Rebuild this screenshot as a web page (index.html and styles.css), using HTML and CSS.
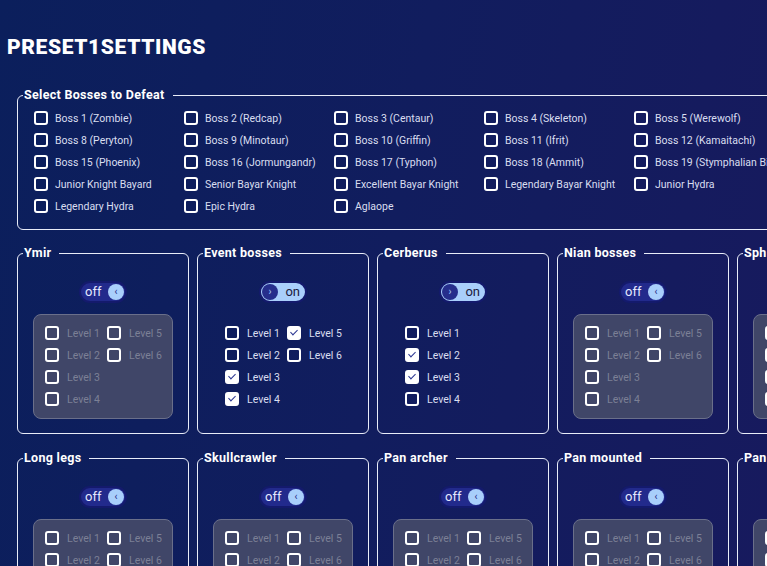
FILE: index.html
```html
<!DOCTYPE html>
<html>
<head>
<meta charset="utf-8">
<link rel="stylesheet" href="styles.css">
</head>
<body>
<div class="page">
  <h1 class="title">PRESET1SETTINGS</h1>

  <fieldset class="bosses">
    <legend>Select Bosses to Defeat</legend>
    <div class="boss-grid">
      <label class="opt"><span class="box"></span>Boss 1 (Zombie)</label>
      <label class="opt"><span class="box"></span>Boss 2 (Redcap)</label>
      <label class="opt"><span class="box"></span>Boss 3 (Centaur)</label>
      <label class="opt"><span class="box"></span>Boss 4 (Skeleton)</label>
      <label class="opt"><span class="box"></span>Boss 5 (Werewolf)</label>
      <label class="opt"><span class="box"></span>Boss 8 (Peryton)</label>
      <label class="opt"><span class="box"></span>Boss 9 (Minotaur)</label>
      <label class="opt"><span class="box"></span>Boss 10 (Griffin)</label>
      <label class="opt"><span class="box"></span>Boss 11 (Ifrit)</label>
      <label class="opt"><span class="box"></span>Boss 12 (Kamaitachi)</label>
      <label class="opt"><span class="box"></span>Boss 15 (Phoenix)</label>
      <label class="opt"><span class="box"></span>Boss 16 (Jormungandr)</label>
      <label class="opt"><span class="box"></span>Boss 17 (Typhon)</label>
      <label class="opt"><span class="box"></span>Boss 18 (Ammit)</label>
      <label class="opt"><span class="box"></span>Boss 19 (Stymphalian Birds)</label>
      <label class="opt"><span class="box"></span>Junior Knight Bayard</label>
      <label class="opt"><span class="box"></span>Senior Bayar Knight</label>
      <label class="opt"><span class="box"></span>Excellent Bayar Knight</label>
      <label class="opt"><span class="box"></span>Legendary Bayar Knight</label>
      <label class="opt"><span class="box"></span>Junior Hydra</label>
      <label class="opt"><span class="box"></span>Legendary Hydra</label>
      <label class="opt"><span class="box"></span>Epic Hydra</label>
      <label class="opt"><span class="box"></span>Aglaope</label>
    </div>
  </fieldset>

  <div class="cards">
    <fieldset class="card">
      <legend>Ymir</legend>
      <div class="card-body">
        <div class="toggle off"><span class="tx">off</span><span class="knob">‹</span></div>
        <div class="levels disabled">
          <label class="opt"><span class="box"></span>Level 1</label>
          <label class="opt"><span class="box"></span>Level 5</label>
          <label class="opt"><span class="box"></span>Level 2</label>
          <label class="opt"><span class="box"></span>Level 6</label>
          <label class="opt"><span class="box"></span>Level 3</label>
          <span></span>
          <label class="opt"><span class="box"></span>Level 4</label>
        </div>
      </div>
    </fieldset>

    <fieldset class="card">
      <legend>Event bosses</legend>
      <div class="card-body">
        <div class="toggle on"><span class="knob">›</span><span class="tx">on</span></div>
        <div class="levels">
          <label class="opt"><span class="box"></span>Level 1</label>
          <label class="opt"><span class="box checked"></span>Level 5</label>
          <label class="opt"><span class="box"></span>Level 2</label>
          <label class="opt"><span class="box"></span>Level 6</label>
          <label class="opt"><span class="box checked"></span>Level 3</label>
          <span></span>
          <label class="opt"><span class="box checked"></span>Level 4</label>
        </div>
      </div>
    </fieldset>

    <fieldset class="card">
      <legend>Cerberus</legend>
      <div class="card-body">
        <div class="toggle on"><span class="knob">›</span><span class="tx">on</span></div>
        <div class="levels single">
          <label class="opt"><span class="box"></span>Level 1</label>
          <label class="opt"><span class="box checked"></span>Level 2</label>
          <label class="opt"><span class="box checked"></span>Level 3</label>
          <label class="opt"><span class="box"></span>Level 4</label>
        </div>
      </div>
    </fieldset>

    <fieldset class="card">
      <legend>Nian bosses</legend>
      <div class="card-body">
        <div class="toggle off"><span class="tx">off</span><span class="knob">‹</span></div>
        <div class="levels disabled">
          <label class="opt"><span class="box"></span>Level 1</label>
          <label class="opt"><span class="box"></span>Level 5</label>
          <label class="opt"><span class="box"></span>Level 2</label>
          <label class="opt"><span class="box"></span>Level 6</label>
          <label class="opt"><span class="box"></span>Level 3</label>
          <span></span>
          <label class="opt"><span class="box"></span>Level 4</label>
        </div>
      </div>
    </fieldset>

    <fieldset class="card">
      <legend>Sphinx</legend>
      <div class="card-body">
        <div class="toggle off"><span class="tx">off</span><span class="knob">‹</span></div>
        <div class="levels disabled">
          <label class="opt"><span class="box"></span>Level 1</label>
          <label class="opt"><span class="box"></span>Level 5</label>
          <label class="opt"><span class="box"></span>Level 2</label>
          <label class="opt"><span class="box"></span>Level 6</label>
          <label class="opt"><span class="box"></span>Level 3</label>
          <span></span>
          <label class="opt"><span class="box"></span>Level 4</label>
        </div>
      </div>
    </fieldset>

    <fieldset class="card">
      <legend>Long legs</legend>
      <div class="card-body">
        <div class="toggle off"><span class="tx">off</span><span class="knob">‹</span></div>
        <div class="levels disabled">
          <label class="opt"><span class="box"></span>Level 1</label>
          <label class="opt"><span class="box"></span>Level 5</label>
          <label class="opt"><span class="box"></span>Level 2</label>
          <label class="opt"><span class="box"></span>Level 6</label>
          <label class="opt"><span class="box"></span>Level 3</label>
          <span></span>
          <label class="opt"><span class="box"></span>Level 4</label>
        </div>
      </div>
    </fieldset>

    <fieldset class="card">
      <legend>Skullcrawler</legend>
      <div class="card-body">
        <div class="toggle off"><span class="tx">off</span><span class="knob">‹</span></div>
        <div class="levels disabled">
          <label class="opt"><span class="box"></span>Level 1</label>
          <label class="opt"><span class="box"></span>Level 5</label>
          <label class="opt"><span class="box"></span>Level 2</label>
          <label class="opt"><span class="box"></span>Level 6</label>
          <label class="opt"><span class="box"></span>Level 3</label>
          <span></span>
          <label class="opt"><span class="box"></span>Level 4</label>
        </div>
      </div>
    </fieldset>

    <fieldset class="card">
      <legend>Pan archer</legend>
      <div class="card-body">
        <div class="toggle off"><span class="tx">off</span><span class="knob">‹</span></div>
        <div class="levels disabled">
          <label class="opt"><span class="box"></span>Level 1</label>
          <label class="opt"><span class="box"></span>Level 5</label>
          <label class="opt"><span class="box"></span>Level 2</label>
          <label class="opt"><span class="box"></span>Level 6</label>
          <label class="opt"><span class="box"></span>Level 3</label>
          <span></span>
          <label class="opt"><span class="box"></span>Level 4</label>
        </div>
      </div>
    </fieldset>

    <fieldset class="card">
      <legend>Pan mounted</legend>
      <div class="card-body">
        <div class="toggle off"><span class="tx">off</span><span class="knob">‹</span></div>
        <div class="levels disabled">
          <label class="opt"><span class="box"></span>Level 1</label>
          <label class="opt"><span class="box"></span>Level 5</label>
          <label class="opt"><span class="box"></span>Level 2</label>
          <label class="opt"><span class="box"></span>Level 6</label>
          <label class="opt"><span class="box"></span>Level 3</label>
          <span></span>
          <label class="opt"><span class="box"></span>Level 4</label>
        </div>
      </div>
    </fieldset>

    <fieldset class="card">
      <legend>Pan warrior</legend>
      <div class="card-body">
        <div class="toggle off"><span class="tx">off</span><span class="knob">‹</span></div>
        <div class="levels disabled">
          <label class="opt"><span class="box"></span>Level 1</label>
          <label class="opt"><span class="box"></span>Level 5</label>
          <label class="opt"><span class="box"></span>Level 2</label>
          <label class="opt"><span class="box"></span>Level 6</label>
          <label class="opt"><span class="box"></span>Level 3</label>
          <span></span>
          <label class="opt"><span class="box"></span>Level 4</label>
        </div>
      </div>
    </fieldset>
  </div>
</div>
</body>
</html>
```

FILE: styles.css
```css
html, body {
  margin: 0;
  padding: 0;
  height: 100%;
}
body {
  background: linear-gradient(100deg, #0b1f5c 0%, #111d5e 50%, #171a5e 100%);
  color: #dfe4f5;
  font-family: Roboto, "Liberation Sans", sans-serif;
  overflow: hidden;
}
.page {
  width: 940px;
  padding: 35px 0 0 7px;
}
.title {
  margin: 0 0 29px 0;
  font-size: 21px;
  line-height: 24px;
  font-weight: 900;
  letter-spacing: 0.6px;
  color: #ffffff;
}
fieldset {
  margin: 0;
  border: 1px solid #e8ecf8;
  border-radius: 6px;
  padding: 0;
  min-width: 0;
}
legend {
  margin-left: 5px;
  padding: 0 8px 0 1px;
  font-size: 12.5px;
  line-height: 14px;
  font-weight: 700;
  color: #ffffff;
  letter-spacing: 0.3px;
}
.bosses {
  margin-left: 10px;
  width: 900px;
}
.boss-grid {
  display: grid;
  grid-template-columns: repeat(5, 150px);
  grid-auto-rows: 22px;
  padding: 5px 0 12px 16px;
}
.opt {
  display: flex;
  align-items: center;
  gap: 7px;
  font-size: 10.5px;
  color: #d9def0;
  white-space: nowrap;
}
.box {
  flex: none;
  box-sizing: border-box;
  width: 14px;
  height: 14px;
  border: 2px solid #ffffff;
  border-radius: 3px;
  position: relative;
}
.box.checked {
  background: #ffffff;
}
.box.checked::after {
  content: "";
  position: absolute;
  left: 3px;
  top: 0px;
  width: 3px;
  height: 6px;
  border-right: 1.3px solid #2a3590;
  border-bottom: 1.3px solid #2a3590;
  transform: rotate(45deg);
}
.cards {
  margin: 16px 0 0 10px;
  display: grid;
  grid-template-columns: repeat(5, 172px);
  column-gap: 8px;
  row-gap: 17px;
}
.card {
  box-sizing: border-box;
  height: 188px;
}
.card-body {
  padding: 21px 15px 0 15px;
  display: flex;
  flex-direction: column;
  align-items: center;
}
.toggle {
  box-sizing: border-box;
  width: 48px;
  height: 22px;
  border: 2px solid #141a6c;
  border-radius: 11px;
  display: flex;
  align-items: center;
  justify-content: space-between;
  padding: 0 1px 0 4px;
  font-size: 13px;
}
.toggle.off {
  background: #222a8c;
  color: #e6e8ff;
}
.toggle.on {
  background: #a9cffb;
  color: #1a1a40;
  padding: 0 5px 0 1px;
}
.knob {
  width: 16px;
  height: 16px;
  border-radius: 50%;
  display: flex;
  align-items: center;
  justify-content: center;
  font-size: 10px;
  line-height: 1;
}
.toggle.off .knob {
  background: #a9cffb;
  color: #1e2a80;
}
.toggle.on .knob {
  background: #262e8c;
  color: #a9cffb;
}
.tx {
  line-height: 1;
  padding-bottom: 1px;
}
.levels {
  align-self: stretch;
  box-sizing: border-box;
  margin-top: 11px;
  height: 105px;
  padding: 7px 0 0 11px;
  border: 1px solid transparent;
  border-radius: 8px;
  display: grid;
  grid-template-columns: 62px 62px;
  grid-auto-rows: 22px;
}
.levels.single {
  grid-template-columns: 62px;
}
.levels.disabled {
  background: #404668;
  border-color: #6a6f8a;
}
.levels.disabled .opt {
  color: #7c8096;
}
.levels .opt {
  gap: 8px;
}
```
